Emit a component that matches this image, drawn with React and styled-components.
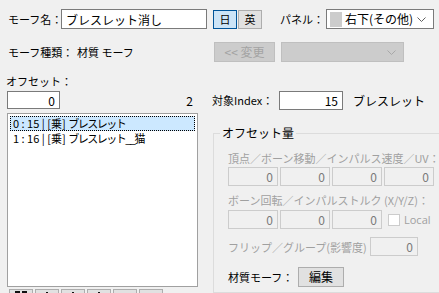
import styled, { createGlobalStyle } from "styled-components";

const GlobalStyle = createGlobalStyle`
  html, body {
    margin: 0;
    padding: 0;
    background: #f0f0f0;
    overflow: hidden;
  }
  body {
    font-family: "Noto Sans CJK JP", "Noto Sans", sans-serif;
    font-size: 11px;
    color: #000;
  }
`;

function Chevron({ disabled }) {
  return (
    <svg width="9" height="5" viewBox="0 0 9 5">
      <polyline
        points="0.5,0.5 4.5,4.5 8.5,0.5"
        fill="none"
        stroke={disabled ? "#a8a8a8" : "#606060"}
        strokeWidth="1"
      />
    </svg>
  );
}

// tiny glyphs peeking out of the cut-off tool buttons
function ToolGlyph({ kind }) {
  if (kind === 0) {
    return (
      <svg width="14" height="4" viewBox="0 0 14 4">
        <rect x="1" y="1" width="5" height="3" fill="#111" />
        <rect x="8" y="1" width="5" height="3" fill="#111" />
      </svg>
    );
  }
  if (kind < 4) {
    return (
      <svg width="4" height="4" viewBox="0 0 4 4">
        <rect x="1" y="2" width="2" height="2" fill="#111" />
      </svg>
    );
  }
  return null;
}

const items = [
  { idx: "0", index: "15", name: "ブレスレット" },
  { idx: "1", index: "16", name: "ブレスレット__猫" },
];

export default function App() {
  return (
    <Window>
      <GlobalStyle />
      <Row $top={9}>
        <Label $w={53}>モーフ名：</Label>
        <TextBox $w={146} $h={20} defaultValue="ブレスレット消し" />
        <ToggleGroup>
          <ToggleButton $active>日</ToggleButton>
          <ToggleButton>英</ToggleButton>
        </ToggleGroup>
        <Label $w={46} $left={18}>パネル：</Label>
        <Combo $w={108}>
          <Swatch />
          <ComboText>右下(その他)</ComboText>
          <Chevron />
        </Combo>
      </Row>

      <Row $top={13}>
        <Label $w={69}>モーフ種類：</Label>
        <Label $w={137}>材質 モーフ</Label>
        <PushButton $w={61} disabled>&lt;&lt; 変更</PushButton>
        <Combo $w={123} $disabled $left={6}>
          <Chevron disabled />
        </Combo>
      </Row>

      <Main>
        <LeftColumn>
          <SmallLabel>オフセット：</SmallLabel>
          <OffsetRow>
            <TextBox $w={53} $h={18} $right defaultValue="0" />
            <Count>2</Count>
          </OffsetRow>
          <ListBox>
            {items.map((it, i) => (
              <ListItem key={it.idx} $selected={i === 0}>
                {it.idx} : {it.index} | [乗] <Kana>{it.name}</Kana>
              </ListItem>
            ))}
          </ListBox>
          <ToolStrip>
            {[0, 1, 2, 3, 4, 5].map((i) => (
              <ToolButton key={i}>
                <ToolGlyph kind={i} />
              </ToolButton>
            ))}
          </ToolStrip>
        </LeftColumn>

        <RightColumn>
          <IndexRow>
            <Label $w={67}>対象Index：</Label>
            <TextBox $w={64} $h={19} $right defaultValue="15" />
            <TargetName>ブレスレット</TargetName>
          </IndexRow>

          <Group>
            <Legend>オフセット量</Legend>
            <DimLabel $top={12}>頂点／ボーン移動／インパルス速度／UV：</DimLabel>
            <FieldRow $top={3}>
              {[0, 1, 2, 3].map((i) => (
                <TextBox key={i} $w={50} $h={19} $right $disabled disabled defaultValue="0" />
              ))}
            </FieldRow>
            <DimLabel $top={8}>ボーン回転／インパルストルク (X/Y/Z)：</DimLabel>
            <FieldRow $top={4}>
              {[0, 1, 2].map((i) => (
                <TextBox key={i} $w={50} $h={19} $right $disabled disabled defaultValue="0" />
              ))}
              <CheckBox />
              <CheckText>Local</CheckText>
            </FieldRow>
            <FieldRow $top={8}>
              <DimLabel $w={140}>フリップ／グループ(影響度)：</DimLabel>
              <TextBox $w={48} $h={19} $right $disabled disabled defaultValue="0" />
            </FieldRow>
            <FieldRow $top={11}>
              <Label $w={68}>材質モーフ：</Label>
              <PushButton $w={46}>編集</PushButton>
            </FieldRow>
          </Group>
        </RightColumn>
      </Main>
    </Window>
  );
}

const Window = styled.div`
  width: 439px;
  height: 293px;
  overflow: hidden;
  background: #f0f0f0;
`;

const Row = styled.div`
  display: flex;
  align-items: center;
  height: 20px;
  padding-left: 8px;
  margin-top: ${(p) => p.$top}px;
`;

const Label = styled.div`
  flex: none;
  width: ${(p) => p.$w}px;
  margin-left: ${(p) => p.$left || 0}px;
  font-size: 11px;
  line-height: 13px;
  white-space: nowrap;
`;

const TextBox = styled.input.attrs({ readOnly: true })`
  box-sizing: border-box;
  flex: none;
  width: ${(p) => p.$w}px;
  height: ${(p) => p.$h}px;
  margin: 0;
  padding: 0 4px;
  border: 1px solid ${(p) => (p.$disabled ? "#cccccc" : "#7a7a7a")};
  background: ${(p) => (p.$disabled ? "#f0f0f0" : "#ffffff")};
  color: ${(p) => (p.$disabled ? "#7a7a7a" : "#000")};
  font-family: "Noto Sans CJK JP", sans-serif;
  font-size: 12px;
  text-align: ${(p) => (p.$right ? "right" : "left")};
  outline: none;
`;

const ToggleGroup = styled.div`
  display: flex;
  gap: 1px;
  margin-left: 6px;
`;

const ToggleButton = styled.div`
  box-sizing: border-box;
  width: 24px;
  height: 19px;
  display: flex;
  align-items: center;
  justify-content: center;
  font-size: 11px;
  background: ${(p) => (p.$active ? "#cce4f7" : "#e1e1e1")};
  border: 1px solid ${(p) => (p.$active ? "#005499" : "#adadad")};
`;

const Combo = styled.div`
  box-sizing: border-box;
  flex: none;
  width: ${(p) => p.$w}px;
  height: 20px;
  margin-left: ${(p) => p.$left || 0}px;
  display: flex;
  align-items: center;
  justify-content: flex-end;
  padding: 0 7px 0 3px;
  background: ${(p) => (p.$disabled ? "#cccccc" : "#ffffff")};
  border: 1px solid ${(p) => (p.$disabled ? "#bfbfbf" : "#7a7a7a")};
`;

const Swatch = styled.div`
  width: 12px;
  height: 15px;
  background: #cccccc;
  flex: none;
`;

const ComboText = styled.div`
  flex: 1;
  margin-left: 3px;
  font-size: 12px;
  line-height: 14px;
  white-space: nowrap;
`;

const PushButton = styled.button`
  box-sizing: border-box;
  flex: none;
  width: ${(p) => p.$w}px;
  height: 20px;
  margin: 0;
  padding: 0;
  font-family: "Noto Sans CJK JP", sans-serif;
  font-size: 12px;
  line-height: 14px;
  color: #000;
  background: #e1e1e1;
  border: 1px solid #adadad;
  &:disabled {
    color: #a3a3a3;
    background: #cccccc;
    border-color: #bfbfbf;
  }
`;

const Main = styled.div`
  display: flex;
  margin-top: 13px;
`;

const LeftColumn = styled.div`
  width: 191px;
  padding-left: 7px;
  flex: none;
`;

const SmallLabel = styled.div`
  font-size: 11px;
  line-height: 13px;
  margin-left: -1px;
`;

const OffsetRow = styled.div`
  display: flex;
  justify-content: space-between;
  align-items: flex-end;
  margin-top: 3px;
  padding-right: 5px;
`;

const Count = styled.div`
  font-size: 12px;
  line-height: 14px;
  margin-bottom: 1px;
`;

const ListBox = styled.div`
  box-sizing: border-box;
  height: 174px;
  margin-top: 4px;
  padding: 2px;
  background: #ffffff;
  border: 1px solid #a0a0a0;
`;

const ListItem = styled.div`
  height: 15px;
  box-sizing: border-box;
  padding-left: 2px;
  font-size: 11px;
  line-height: 13px;
  white-space: nowrap;
  background: ${(p) => (p.$selected ? "#cce8ff" : "transparent")};
  border: 1px dotted ${(p) => (p.$selected ? "#000" : "transparent")};
`;

const Kana = styled.span`
  letter-spacing: -1.5px;
`;

const ToolStrip = styled.div`
  display: flex;
  gap: 2px;
  margin-top: 2px;
  padding-left: 2px;
`;

const ToolButton = styled.div`
  box-sizing: border-box;
  width: 24px;
  height: 20px;
  display: flex;
  justify-content: center;
  background: #e1e1e1;
  border: 1px solid #adadad;
`;

const RightColumn = styled.div`
  margin-left: 14px;
  flex: none;
`;

const IndexRow = styled.div`
  display: flex;
  align-items: center;
  height: 19px;
  margin-top: 16px;
`;

const TargetName = styled.div`
  margin-left: 10px;
  font-size: 12px;
  line-height: 14px;
`;

const Group = styled.fieldset`
  box-sizing: border-box;
  width: 240px;
  height: 167px;
  margin: 16px 0 0 1px;
  padding: 0 0 0 14px;
  border: 1px solid #dcdcdc;
`;

const Legend = styled.legend`
  margin-left: -8px;
  padding: 0 2px;
  font-size: 12px;
  line-height: 14px;
`;

const DimLabel = styled.div`
  flex: none;
  width: ${(p) => (p.$w ? `${p.$w}px` : "auto")};
  margin-top: ${(p) => p.$top || 0}px;
  font-size: 11px;
  line-height: 12px;
  color: #a0a0a0;
  white-space: nowrap;
`;

const FieldRow = styled.div`
  display: flex;
  align-items: center;
  gap: 2px;
  margin-top: ${(p) => p.$top}px;
`;

const CheckBox = styled.div`
  box-sizing: border-box;
  width: 12px;
  height: 12px;
  margin-left: 4px;
  background: #ffffff;
  border: 1px solid #cccccc;
`;

const CheckText = styled.div`
  margin-left: 2px;
  font-family: "Open Sans", sans-serif;
  font-size: 11px;
  color: #a0a0a0;
`;
